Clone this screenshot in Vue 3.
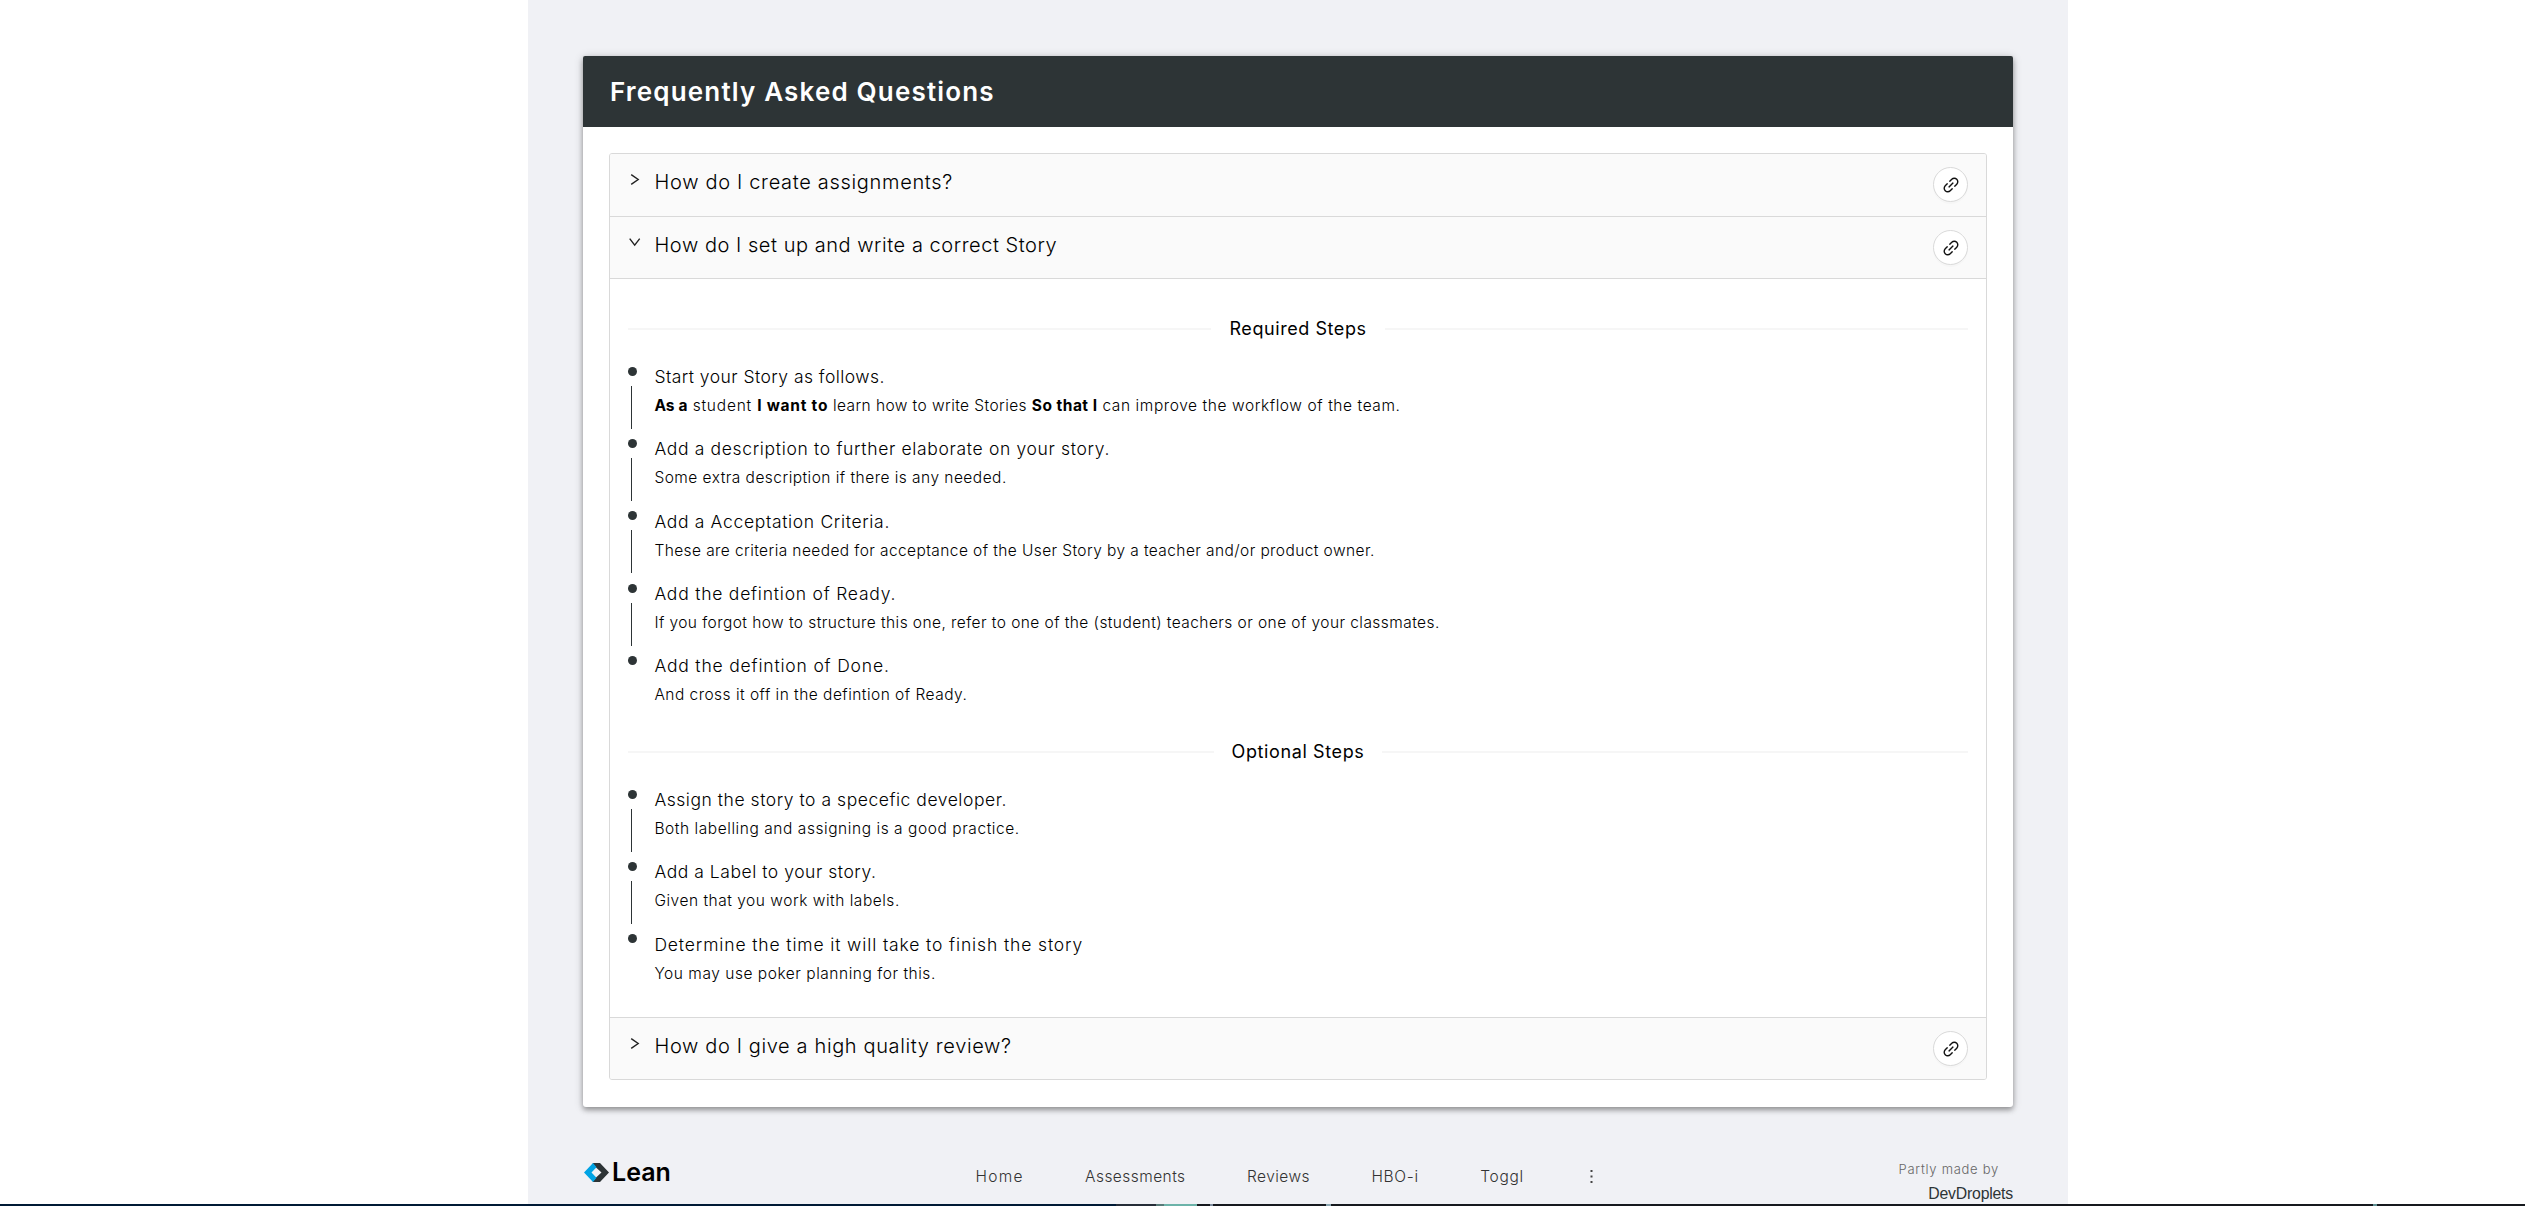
<script setup>
const requiredSteps = [
  {
    title: 'Start your Story as follows.',
    titleTracking: 0.46,
    parts: [
      { text: 'As a', strong: true, tracking: 0.08 },
      { text: ' student ', tracking: 0.8 },
      { text: 'I want to', strong: true, tracking: 0.75 },
      { text: ' learn how to write Stories ', tracking: 0.42 },
      { text: 'So that I', strong: true, tracking: 0.48 },
      { text: ' can improve the workflow of the team.', tracking: 0.58 },
    ],
  },
  {
    title: 'Add a description to further elaborate on your story.',
    titleTracking: 0.663,
    parts: [{ text: 'Some extra description if there is any needed.', tracking: 0.469 }],
  },
  {
    title: 'Add a Acceptation Criteria.',
    titleTracking: 0.666,
    parts: [
      {
        text: 'These are criteria needed for acceptance of the User Story by a teacher and/or product owner.',
        tracking: 0.409,
      },
    ],
  },
  {
    title: 'Add the defintion of Ready.',
    titleTracking: 0.771,
    parts: [
      {
        text: 'If you forgot how to structure this one, refer to one of the (student) teachers or one of your classmates.',
        tracking: 0.432,
      },
    ],
  },
  {
    title: 'Add the defintion of Done.',
    titleTracking: 0.82,
    parts: [{ text: 'And cross it off in the defintion of Ready.', tracking: 0.473 }],
  },
]

const optionalSteps = [
  {
    title: 'Assign the story to a specefic developer.',
    titleTracking: 0.536,
    parts: [{ text: 'Both labelling and assigning is a good practice.', tracking: 0.56 }],
  },
  {
    title: 'Add a Label to your story.',
    titleTracking: 0.538,
    parts: [{ text: 'Given that you work with labels.', tracking: 0.519 }],
  },
  {
    title: 'Determine the time it will take to finish the story',
    titleTracking: 0.87,
    parts: [{ text: 'You may use poker planning for this.', tracking: 0.531 }],
  },
]

const panels = [
  { title: 'How do I create assignments?', tracking: 0.68 },
  {
    title: 'How do I set up and write a correct Story',
    tracking: 0.54,
    open: true,
    sections: [
      { label: 'Required Steps', tracking: 0.564, steps: requiredSteps },
      { label: 'Optional Steps', tracking: 0.62, steps: optionalSteps },
    ],
  },
  { title: 'How do I give a high quality review?', tracking: 0.63 },
]

const links = [
  { label: 'Home', tracking: 1.2 },
  { label: 'Assessments', tracking: 0.448 },
  { label: 'Reviews', tracking: 0.436 },
  { label: 'HBO-i', tracking: 0.671 },
  { label: 'Toggl', tracking: 0.7 },
]

const spacing = (value) => ({ letterSpacing: value + 'px' })
</script>

<template>
  <div class="page">
    <main class="layout">
      <section class="card">
        <h1 class="card-title">Frequently Asked Questions</h1>
        <div class="card-body">
          <div class="collapse">
            <article v-for="panel in panels" :key="panel.title" class="panel">
              <header class="panel-header">
                <svg class="arrow" viewBox="0 0 12 11" width="12" height="11">
                  <path v-if="panel.open" d="M.7 1.6 L5.7 8.2 L10.7 1.6" />
                  <path v-else d="M2.2 .6 L9.2 5.5 L2.2 10.4" />
                </svg>
                <span class="panel-title" :style="spacing(panel.tracking)">{{ panel.title }}</span>
                <button class="link-button" type="button" aria-label="Copy link">
                  <svg viewBox="0 0 1024 1024" width="20" height="20">
                    <path
                      d="M574 665.4a8.03 8.03 0 00-11.3 0L446.5 781.6c-53.8 53.8-144.6 59.5-204 0-59.5-59.5-53.8-150.2 0-204l116.2-116.2c3.1-3.1 3.1-8.2 0-11.3l-39.8-39.8a8.03 8.03 0 00-11.3 0L191.4 526.5c-84.6 84.6-84.6 221.5 0 306s221.5 84.6 306 0l116.2-116.2c3.1-3.1 3.1-8.2 0-11.3L574 665.4zm258.6-474c-84.6-84.6-221.5-84.6-306 0L410.3 307.6a8.03 8.03 0 000 11.3l39.7 39.7c3.1 3.1 8.2 3.1 11.3 0l116.2-116.2c53.8-53.8 144.6-59.5 204 0 59.5 59.5 53.8 150.2 0 204L665.3 562.6a8.03 8.03 0 000 11.3l39.8 39.8c3.1 3.1 8.2 3.1 11.3 0l116.2-116.2c84.5-84.6 84.5-221.5 0-306.1zM610.1 372.3a8.03 8.03 0 00-11.3 0L372.3 598.7a8.03 8.03 0 000 11.3l39.6 39.6c3.1 3.1 8.2 3.1 11.3 0l226.4-226.4c3.1-3.1 3.1-8.2 0-11.3l-39.5-39.6z"
                    />
                  </svg>
                </button>
              </header>
              <div v-if="panel.open" class="panel-content">
                <section v-for="section in panel.sections" :key="section.label" class="section">
                  <h2 class="divider">
                    <span :style="spacing(section.tracking)">{{ section.label }}</span>
                  </h2>
                  <ol class="steps">
                    <li v-for="step in section.steps" :key="step.title" class="step">
                      <div class="marker"><i class="dot"></i><i class="tail"></i></div>
                      <div class="step-body">
                        <div class="step-title" :style="spacing(step.titleTracking)">{{ step.title }}</div>
                        <div class="step-text">
                          <component
                            :is="part.strong ? 'strong' : 'span'"
                            v-for="part in step.parts"
                            :key="part.text"
                            :style="spacing(part.tracking)"
                            >{{ part.text }}</component
                          >
                        </div>
                      </div>
                    </li>
                  </ol>
                </section>
              </div>
            </article>
          </div>
        </div>
      </section>

      <footer class="footer">
        <div class="brand">
          <svg viewBox="0 0 25 19" width="25" height="19">
            <path fill="#2d3436" d="M8.5 0 H16 L25 9.5 L16 19 H8.5 L11.5 15 L17.5 9.5 L11.5 4 Z" />
            <path fill="#00a3e4" d="M9 0 L0 9.5 L9 19 L12.5 14.7 L7.5 9.5 L12.5 4.3 Z" />
          </svg>
          <span class="brand-name">Lean</span>
        </div>
        <nav class="nav">
          <a v-for="link in links" :key="link.label" :style="spacing(link.tracking)">{{ link.label }}</a>
          <svg class="more" viewBox="0 0 3 13" width="3" height="13">
            <path d="M.5 0h2v2h-2zM.5 5.5h2v2h-2zM.5 11h2v2h-2z" />
          </svg>
        </nav>
        <div class="credit">
          <span class="credit-label">Partly made by</span>
          <span class="credit-name">DevDroplets</span>
        </div>
      </footer>
    </main>
    <div class="edge"></div>
  </div>
</template>

<style>
body {
  background: #fff;
  overflow: hidden;
}
</style>

<style scoped>
* {
  box-sizing: border-box;
}
.page {
  display: flex;
  flex-direction: column;
  height: 1206px;
  font-family: Inter, 'Open Sans', sans-serif;
  font-weight: 300;
  color: #000;
}
.layout {
  flex: none;
  width: 1540px;
  height: 1204px;
  margin-left: 528px;
  padding: 56px 55px 0;
  background: #f0f1f5;
}
.edge {
  flex: none;
  height: 2px;
  background: linear-gradient(
    90deg,
    #001a35 0 1116px,
    #262d38 1116px 1156px,
    #587a78 1156px 1164px,
    #6cb3a9 1164px 1197px,
    #16191e 1197px 1210px,
    #7d8b9c 1210px 1213px,
    #16191e 1213px 1326px,
    #8aa5b0 1326px 1331px,
    #16191e 1331px 2373px,
    #5f8f92 2373px 2377px,
    #16191e 2377px
  );
}
.card {
  height: 1051px;
  background: #fff;
  border-radius: 3px;
  box-shadow: 0 1px 10px rgba(0, 0, 0, 0.2), 0 3px 5px rgba(0, 0, 0, 0.3);
}
.card-title {
  margin: 0;
  height: 71px;
  padding-left: 27px;
  border-radius: 2px 2px 0 0;
  background: #2d3436;
  color: #fff;
  font-size: 26px;
  font-weight: 600;
  line-height: 71px;
  letter-spacing: 1.17px;
}
.card-body {
  padding: 26px;
}
.collapse {
  border: 1px solid #d9d9d9;
  border-radius: 3px;
  overflow: hidden;
}
.panel + .panel {
  border-top: 1px solid #d9d9d9;
}
.panel-header {
  display: flex;
  align-items: flex-start;
  height: 61px;
  padding: 0 18px 0 19px;
  background: #fafafa;
}
.panel:first-child .panel-header {
  height: 62px;
}
.arrow {
  margin-top: 20px;
  fill: none;
  stroke: #222;
  stroke-width: 1.4;
}
.panel-title {
  margin-left: 13.5px;
  font-size: 20px;
  line-height: 57px;
}
.link-button {
  display: flex;
  align-items: center;
  justify-content: center;
  width: 35px;
  height: 35px;
  margin: 13px 0 0 auto;
  padding: 0;
  border: 1px solid #d9d9d9;
  border-radius: 50%;
  background: #fff;
  box-shadow: 0 2px 1px rgba(0, 0, 0, 0.02);
}
.link-button svg {
  flex: none;
  fill: #111;
}
.panel-content {
  height: 739px;
  padding: 34px 18px 0;
  border-top: 1px solid #d9d9d9;
  background: #fff;
}
.section + .section {
  margin-top: 8px;
}
.divider {
  display: flex;
  align-items: center;
  gap: 18px;
  height: 32px;
  margin: 0 0 22px;
  font-size: 18px;
  font-weight: 400;
  line-height: 32px;
}
.divider::before,
.divider::after {
  content: '';
  flex: 1;
  height: 2px;
  background: #f6f6f6;
}
.steps {
  margin: 0;
  padding: 0;
  list-style: none;
}
.step {
  display: flex;
  height: 72.2px;
}
.step-body {
  padding-top: 0.2px;
}
.marker {
  display: flex;
  flex-direction: column;
  width: 26.4px;
}
.dot {
  width: 9px;
  height: 9px;
  border-radius: 50%;
  background: #2d3436;
}
.tail {
  width: 1px;
  height: 43px;
  margin: 10px 0 0 3px;
  background: #2d3436;
}
.step:last-child .tail {
  display: none;
}
.step-title {
  font-size: 17.5px;
  line-height: 20px;
  white-space: nowrap;
}
.step-text {
  margin-top: 4px;
  font-size: 15.5px;
  line-height: 29px;
  white-space: pre;
}
.step-text strong {
  font-weight: 700;
}
.footer {
  display: flex;
  align-items: flex-start;
  height: 97px;
}
.brand {
  display: flex;
  align-items: center;
  width: 392.6px;
  margin-top: 55px;
  padding-left: 1px;
}
.brand-name {
  margin-left: 3px;
  padding-top: 1px;
  font-size: 25px;
  font-weight: 600;
  line-height: 19px;
}
.nav {
  display: flex;
  gap: 61.5px;
  margin-top: 60px;
  font-size: 15.5px;
  line-height: 20px;
  color: #333;
}
.more {
  margin: 3px 0 0 5px;
  fill: #444;
}
.credit {
  display: flex;
  flex-direction: column;
  align-items: flex-end;
  margin: 51px 0 0 auto;
}
.credit-label {
  padding-right: 14px;
  font-size: 13px;
  line-height: 22px;
  letter-spacing: 0.72px;
  color: #666;
}
.credit-name {
  font-family: 'Liberation Sans', Arial, sans-serif;
  font-size: 15.8px;
  letter-spacing: -0.2px;
  font-weight: 400;
  line-height: 27px;
  color: #2d3436;
}
</style>
